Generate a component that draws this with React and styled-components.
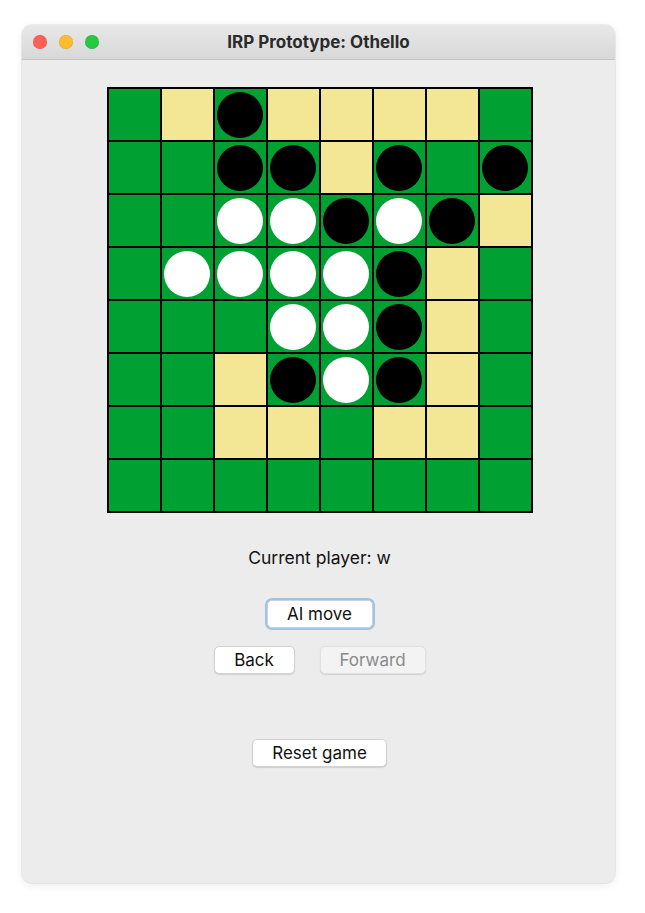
import React from "react"
import styled, { createGlobalStyle } from "styled-components"

const GlobalStyle = createGlobalStyle`
  html, body {
    margin: 0;
    padding: 0;
    background: #ffffff;
  }
  body {
    font-family: Inter, "Liberation Sans", sans-serif;
  }
`

const Page = styled.div`
  padding: 25px 0 0 22px;
  height: 913px;
  box-sizing: border-box;
`

const Window = styled.div`
  width: 593px;
  height: 858px;
  background: #ececec;
  border-radius: 10px;
  overflow: hidden;
  box-shadow: 0 0 0 1px rgba(0, 0, 0, 0.06), 0 2px 8px rgba(0, 0, 0, 0.08);
  display: flex;
  flex-direction: column;
`

const TitleBar = styled.div`
  height: 35px;
  flex-shrink: 0;
  box-sizing: border-box;
  background: linear-gradient(#e8e8e8, #d8d8d8);
  border-bottom: 1px solid #c4c4c4;
  display: flex;
  align-items: center;
  position: relative;
  padding-left: 11px;
  gap: 12px;
`

const Light = styled.span`
  width: 14px;
  height: 14px;
  border-radius: 50%;
  background: ${props => props.color};
  box-shadow: inset 0 0 0 0.5px rgba(0, 0, 0, 0.12);
`

const Title = styled.div`
  position: absolute;
  left: 0;
  right: 0;
  text-align: center;
  font-size: 17px;
  font-weight: 700;
  color: #2b2b2b;
  pointer-events: none;
`

const Content = styled.div`
  flex: 1;
  display: flex;
  flex-direction: column;
  align-items: center;
  padding-top: 27px;
  padding-left: 2px;
`

const Board = styled.div`
  display: grid;
  grid-template-columns: repeat(8, 51px);
  grid-template-rows: repeat(8, 51px);
  gap: 2px;
  padding: 2px;
  background: #000;
`

const Cell = styled.div`
  background: ${props => (props.hint ? "#f3e795" : "#00a133")};
  display: flex;
  align-items: center;
  justify-content: center;
`

const Disc = styled.div`
  width: 46px;
  height: 46px;
  border-radius: 50%;
  background: ${props => (props.white ? "#ffffff" : "#000000")};
`

const Status = styled.div`
  margin-top: 34px;
  font-size: 17.5px;
  color: #111;
  line-height: 22px;
`

const Row = styled.div`
  display: flex;
  gap: 25px;
  margin-top: ${props => props.top || 0}px;
`

const Button = styled.button`
  font-family: inherit;
  font-size: 17px;
  height: 28px;
  width: ${props => props.w}px;
  padding: 0;
  border-radius: 5px;
  background: ${props => (props.disabled ? "#f3f3f3" : "#ffffff")};
  color: ${props => (props.disabled ? "#8a8a8a" : "#111")};
  border: 1px solid ${props => (props.disabled ? "#e0e0e0" : "#d2d2d2")};
  box-shadow: ${props =>
    props.focused
      ? "0 0 0 2px #9cc3ee"
      : "0 1px 1px rgba(0, 0, 0, 0.12)"};
  outline: 0;
`

const BOARD = [
  "GYBYYYYG",
  "GGBBYBGB",
  "GGWWBWBY",
  "GWWWWBYG",
  "GGGWWBYG",
  "GGYBWBYG",
  "GGYYGYYG",
  "GGGGGGGG"
]

const App = () => {
  return (
    <Page>
      <GlobalStyle />
      <Window>
        <TitleBar>
          <Light color="#fe5f57" />
          <Light color="#febc2e" />
          <Light color="#28c840" />
          <Title>IRP Prototype: Othello</Title>
        </TitleBar>
        <Content>
          <Board>
            {BOARD.map((row, r) =>
              row.split("").map((c, i) => (
                <Cell key={r + "-" + i} hint={c === "Y"}>
                  {c === "B" && <Disc />}
                  {c === "W" && <Disc white />}
                </Cell>
              ))
            )}
          </Board>
          <Status>Current player: w</Status>
          <Row top={31}>
            <Button focused w={106}>AI move</Button>
          </Row>
          <Row top={18}>
            <Button w={81}>Back</Button>
            <Button disabled w={106}>Forward</Button>
          </Row>
          <Row top={65}>
            <Button w={135}>Reset game</Button>
          </Row>
        </Content>
      </Window>
    </Page>
  )
}

export default App
